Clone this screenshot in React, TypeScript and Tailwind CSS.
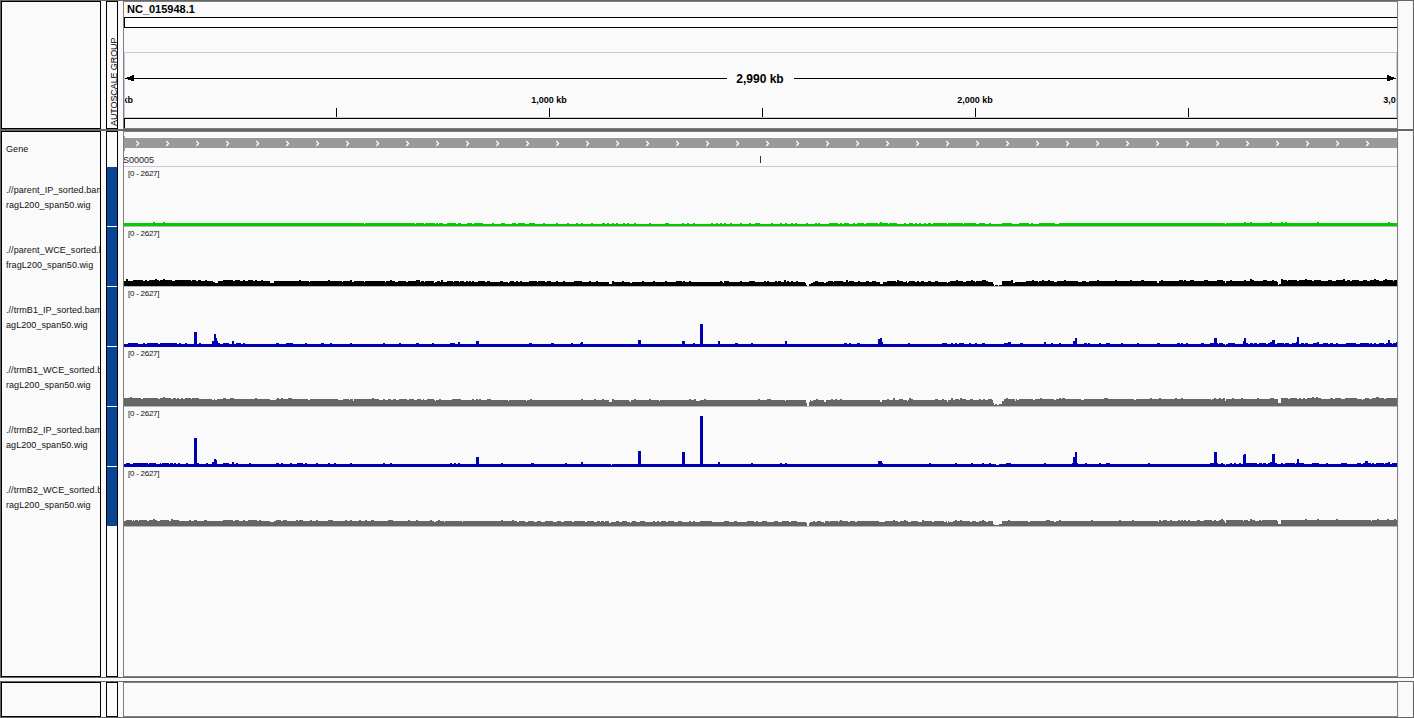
import React from "react";

type Track = {
  name: [string, string];
  color: string;
  bottom: number;
  base: string;
  steps: string;
};

const LEFT = 124;
const RIGHT = 1397;

// base: "x:height" breakpoints. steps: "height=x,width x,width ..." groups; later groups overwrite earlier ones.
const TRACKS: Track[] = [
  {
    name: [".//parent_IP_sorted.bam.f", "ragL200_span50.wig"],
    color: "#00cc00",
    bottom: 59,
    base: "124:3 415:2 1059:3",
    steps:
      "2=364,1 1225,1;3=416,8 425,10 436,2 439,4 447,9 458,3 467,5 474,9 492,2 501,4 512,4 518,7 529,6 543,2 556,2 567,2 576,2 581,2 591,2 602,3 607,2 612,2 616,2 623,2 627,2 634,2 649,2 665,4 682,2 687,2 693,2 711,2 716,2 720,2 724,2 730,2 740,2 749,2 755,5 771,2 780,2 785,2 791,2 795,2 806,2 815,2 818,2 829,9 840,2 844,5 853,2 857,7 866,12 879,9 889,8 904,2 909,4 915,2 919,2 924,2 928,3 933,14 948,15 964,12 979,6 989,2 1002,10 1019,10 1031,2 1039,16;4=153,2 163,2 880,2 1244,2 1250,2 1270,2 1281,2 1285,2 1317,2 1388,2",
  },
  {
    name: [".//parent_WCE_sorted.bam.", "fragL200_span50.wig"],
    color: "#000000",
    bottom: 59,
    base: "124:5 434:4 1002:5",
    steps:
      "6=126,2 133,10 145,2 149,10 160,12 175,16 192,4 198,3 205,2 223,10 235,5 243,2 248,5 255,2 261,2 299,2 328,2 350,2 390,2 416,4 441,2 784,2 846,2 897,2 956,2 971,2 982,4 1011,2 1032,2 1042,2 1048,2 1064,2 1097,2 1115,2 1130,2 1141,3 1161,2 1179,4 1184,2 1190,4 1204,4 1217,6 1230,2 1244,2 1252,2 1263,4 1272,2 1283,4 1288,9 1299,10 1308,4 1314,7 1328,4 1336,7 1347,3 1352,7 1363,4 1370,9 1383,10 1394,3;7=126,2 155,2 163,2 1250,2 1281,2 1305,2 1343,2 1374,2 1385,2;5=437,3 447,6 454,5 460,4 466,2 469,2 472,2 478,7 487,3 500,3 510,4 516,2 520,2 529,8 538,7 547,4 556,2 563,2 574,8 589,2 596,2 612,2 622,2 642,2 653,2 665,2 676,6 683,2 689,2 720,2 724,5 740,2 749,6 764,2 767,2 775,2 778,3 787,2 791,2 796,2 815,3 828,5 834,9 849,5 858,2 866,3 872,4 887,9 899,4 906,2 909,6 917,2 921,3 928,3 935,3 950,6 958,5 966,5 973,2 976,6 986,2;4=213,5 309,1 342,1 352,2 364,1 385,1 395,3 406,2 420,1 424,1 1015,11 1038,1 1054,3 1078,4 1086,3 1277,1;3=215,3 270,4 434,1 508,1 630,2 723,1 811,2 824,2 907,1 947,1 805,1 1013,2 1157,2 1225,1;2=609,3 809,2 880,3 993,1 1279,2;1=806,1 995,3 999,3 1278,1;0=807,2 994,1 998,1",
  },
  {
    name: [".//trmB1_IP_sorted.bam.fr", "agL200_span50.wig"],
    color: "#0000b2",
    bottom: 60,
    base: "124:3",
    steps:
      "4=128,10 143,2 147,11 160,17 179,2 185,2 199,2 216,4 223,6 236,5 243,2 276,3 286,7 305,2 321,3 330,2 350,2 383,2 399,2 416,3 432,2 450,5 529,3 551,3 571,2 580,1 693,2 735,3 751,2 844,3 849,2 857,3 908,2 942,5 951,2 955,2 959,5 969,2 975,2 982,3 1004,4 1020,3 1051,2 1059,2 1084,3 1088,2 1099,2 1106,4 1121,2 1137,2 1157,3 1177,3 1181,2 1186,2 1201,3 1210,4 1217,1 1219,4 1228,7 1246,2 1250,3 1254,3 1259,7 1268,2 1277,7 1285,4 1292,4 1301,3 1305,3 1313,4 1323,5 1330,3 1336,2 1346,10 1360,9 1370,2 1374,2 1379,5 1386,2 1390,2 1393,3;5=458,2 581,2 882,1 1008,3 1044,2 1270,2 1296,1 1317,2 1396,1;6=212,2 217,1 232,2 476,3 682,3 718,2 785,2 1073,2 1243,1;7=638,3 1272,3 1388,2;8=878,2;9=216,1 880,2 1075,2 1214,3 1244,2;10=1297,2;13=214,2;15=194,3;23=700,3;2=1225,1",
  },
  {
    name: [".//trmB1_WCE_sorted.bam.f", "ragL200_span50.wig"],
    color: "#666666",
    bottom: 59,
    base: "124:7 434:6 1003:7",
    steps:
      "8=124,17 143,15 160,11 173,3 177,2 181,2 185,6 192,7 223,3 230,4 255,2 277,2 281,2 288,4 372,2 893,2 909,2 951,2 960,2 1006,2 1040,2 1059,2 1062,3 1104,4 1150,2 1159,2 1175,2 1181,2 1214,2 1219,2 1223,2 1232,2 1241,2 1257,2 1270,4 1281,7 1290,7 1299,2 1303,2 1307,5 1314,2 1318,3 1330,3 1335,6 1345,12 1365,4 1372,4 1379,5 1386,11;9=130,2 163,2 1312,2 1316,2 1376,3;7=439,2 452,9 472,2 476,2 479,2 487,4 530,2 581,2 594,2 602,2 612,2 634,2 649,2 689,2 694,2 704,2 758,2 767,4 816,2 831,2 835,2 840,2 887,2 899,4 911,2 935,3 942,2 955,4 962,4 970,3 979,2 983,2 988,4;6=212,2 215,2 270,6 308,2 338,5 349,1 379,4 385,3 391,2 396,3 407,2 414,3 421,2 424,3 1017,2 1033,2 1054,2 1081,3 1134,2 1211,1 1362,1;5=353,1 435,1 508,1 526,1 629,2 659,1 696,4 785,1 811,2 907,1 1002,2 1015,1 1225,1;4=609,3 630,1 809,1 824,2 880,2 947,1;3=806,1 993,1 1278,3;2=995,2 999,3;1=994,1 997,2;0=807,2",
  },
  {
    name: [".//trmB2_IP_sorted.bam.fr", "agL200_span50.wig"],
    color: "#0000b2",
    bottom: 60,
    base: "124:3",
    steps:
      "4=126,4 133,15 149,7 160,1 162,7 170,3 174,2 178,2 186,2 197,2 206,2 223,6 236,2 249,2 276,3 281,2 290,2 297,6 305,2 316,2 328,2 334,2 350,2 383,2 390,2 450,2 454,2 458,2 501,2 531,3 565,2 751,2 780,2 785,2 882,1 929,2 955,2 971,2 982,2 989,2 1006,5 1044,2 1072,6 1085,2 1099,2 1106,4 1148,2 1210,4 1217,1 1221,2 1230,2 1234,2 1239,2 1246,11 1259,3 1263,3 1268,2 1275,2 1281,2 1285,10 1296,1 1299,5 1312,7 1326,2 1341,6 1357,4 1363,2 1368,3 1372,2 1376,8 1385,3 1392,5;5=212,2 232,2 581,2 718,2 1270,2 1388,2;6=878,4 1365,3;7=216,1;8=214,2 1297,2;10=476,3 1073,2;12=1243,1;13=1244,2 1272,3;15=682,3 1075,2 1214,3;16=638,3;29=194,3;51=700,3;2=611,1 996,3 1225,1",
  },
  {
    name: [".//trmB2_WCE_sorted.bam.f", "ragL200_span50.wig"],
    color: "#666666",
    bottom: 59,
    base: "124:5 609:4 811:5 1281:6",
    steps:
      "6=126,6 133,1 135,3 139,8 149,8 160,9 171,8 189,2 194,3 204,3 223,10 235,4 243,2 248,9 259,2 276,5 283,4 296,2 299,4 310,2 316,2 328,5 345,2 350,2 359,2 365,2 371,3 388,5 408,2 416,2 430,2 438,2 501,2 512,2 840,2 893,2 904,2 922,2 955,2 960,2 982,2 1008,2 1046,4 1059,2 1091,2 1119,2 1132,2 1159,2 1163,4 1170,2 1178,2 1181,2 1184,2 1188,2 1197,3 1204,8 1214,2 1219,5 1226,17 1244,4 1252,3 1259,2 1262,15;7=153,2 171,2 1221,2 1250,2 1305,2 1317,2 1336,2 1377,2 1387,2 1394,2;5=616,3 622,5 632,4 640,5 653,2 657,2 661,5 668,6 678,4 689,2 693,2 700,12 724,5 734,3 747,7 756,2 762,5 774,4 782,7 791,6 1371,1;4=270,4 434,2 444,1 462,1 517,2 525,3 534,3 541,4 553,4 561,3 572,2 585,2 594,3 600,1 604,1 809,4 815,2 821,4 829,1 838,1 848,2 855,2 879,6 898,2 908,3 918,4 932,2 944,2 949,4 970,2 976,3 986,2 1028,2 1054,2 1158,1;3=609,2 630,1 806,1 809,1 824,1 947,1 1225,1;2=993,1 999,3 1278,3;1=994,5;0=807,2",
  },
];

function heights(track: Track): number[] {
  const out: number[] = new Array(RIGHT - LEFT).fill(0);
  for (const part of track.base.split(" ")) {
    const [x, h] = part.split(":").map(Number);
    out.fill(h, x - LEFT);
  }
  for (const group of track.steps.split(";")) {
    const [h, list] = group.split("=");
    for (const item of list.split(" ")) {
      const [x, w] = item.split(",").map(Number);
      out.fill(Number(h), x - LEFT, x - LEFT + w);
    }
  }
  return out;
}

function profilePath(track: Track): string {
  const hs = heights(track);
  let d = `M0 ${track.bottom}`;
  hs.forEach((h, i) => {
    if (i === 0 || hs[i - 1] !== h) d += `V${track.bottom - h}`;
    d += `H${i + 1}`;
  });
  return `${d}V${track.bottom}Z`;
}

function Row({
  height,
  names,
  attributes,
  children,
}: {
  height: string;
  names?: React.ReactNode;
  attributes?: React.ReactNode;
  children?: React.ReactNode;
}) {
  return (
    <div className={`flex border-x border-[#666] ${height}`}>
      <div className="mr-[5px] w-[100px] shrink-0 overflow-hidden border border-black">{names}</div>
      <div className="mr-[5px] w-[12px] shrink-0 border border-black">{attributes}</div>
      <div className="w-[1275px] shrink-0 overflow-hidden border border-[#808080]">{children}</div>
      <div className="flex-1 border-l border-r border-[#f0f0f0]" />
    </div>
  );
}

function Ruler() {
  return (
    <svg className="block" width="1271" height="64" viewBox="125 53 1271 64" fontWeight="bold">
      <g shapeRendering="crispEdges" fill="#000">
        <rect x="125" y="78" width="602" height="1" />
        <rect x="794" y="78" width="602" height="1" />
        {[336, 549, 762, 975, 1188].map((x) => (
          <rect key={x} x={x} y="108" width="1" height="9" />
        ))}
        <path d="M125 78H127V77H130V76H132V75H134V81H131V80H128V79H125Z" />
        <path d="M1396 78H1394V77H1391V76H1389V75H1387V81H1390V80H1393V79H1396Z" />
      </g>
      <text x="760" y="83" fontSize="12" textAnchor="middle">2,990 kb</text>
      <g fontSize="9" textAnchor="middle">
        <text x="124" y="103">0 kb</text>
        <text x="549" y="103">1,000 kb</text>
        <text x="975" y="103">2,000 kb</text>
        <text x="1401" y="103">3,000 kb</text>
      </g>
    </svg>
  );
}

function GeneTrack() {
  return (
    <svg className="block" width="1273" height="35" viewBox="124 132 1273 35">
      <g shapeRendering="crispEdges">
        <rect x="124" y="138" width="1273" height="10" fill="#999" />
        <rect x="124" y="136" width="1" height="15" fill="#999" />
        <rect x="760" y="156" width="1" height="7" fill="#333" />
        <rect x="124" y="166" width="1273" height="1" fill="#c8c8dc" />
      </g>
      <path
        d={Array.from({ length: 42 }, (_, i) => `M${136.3 + i * 30} 141l2.3 2.5l-2.3 2.5`).join("")}
        fill="none"
        stroke="#fff"
        strokeWidth="1.2"
      />
      <text x="123" y="163" fontSize="9" fill="#222">S00005</text>
    </svg>
  );
}

export default function App() {
  return (
    <div className="h-[718px] w-[1414px] overflow-hidden bg-[#fafafa] font-['Liberation_Sans',Arial,sans-serif] text-black">
      <div className="h-px bg-[#666]" />
      <Row
        height="h-[128px]"
        attributes={
          <div className="flex h-full rotate-180 items-start pt-[2px] pr-[2px] text-[9px] leading-[11px] tracking-[-0.1px] whitespace-nowrap [writing-mode:vertical-rl]">
            AUTOSCALE GROUP
          </div>
        }
      >
        <div className="h-[15px] pl-[3px] text-[11px] leading-[15px] font-bold">NC_015948.1</div>
        <div className="h-[11px] border-y border-l border-black bg-white" />
        <div className="mt-6 h-[66px] border border-[#c8c8dc]">
          <Ruler />
        </div>
        <div className="h-[10px] border-t border-l border-black" />
      </Row>
      <div className="h-[2px] bg-[#666]" />
      <Row
        height="h-[546px]"
        names={
          <div className="pl-1 text-[9px] tracking-[0.06px] whitespace-nowrap text-[#111]">
            <div className="h-[35px] leading-[35px]">Gene</div>
            {TRACKS.map((t) => (
              <div key={t.name[0]} className="h-[60px] pt-4 leading-[15px]">
                <div>{t.name[0]}</div>
                <div>{t.name[1]}</div>
              </div>
            ))}
          </div>
        }
        attributes={
          <div className="pt-[35px]">
            {TRACKS.map((t) => (
              <div key={t.name[0]} className="h-[60px] border-b border-white bg-[#0a4595]" />
            ))}
          </div>
        }
      >
        <GeneTrack />
        {TRACKS.map((t) => (
          <svg key={t.name[0]} className="block" width="1273" height="60" viewBox="0 0 1273 60">
            <rect y="59" width="1273" height="1" fill="#b8b8b8" shapeRendering="crispEdges" />
            <path d={profilePath(t)} fill={t.color} shapeRendering="crispEdges" />
            <text x="4" y="9" fontSize="8" fill="#111" textLength="31.5" lengthAdjust="spacing">
              [0 - 2627]
            </text>
          </svg>
        ))}
      </Row>
      <div className="h-px bg-[#666]" />
      <div className="h-[3px]" />
      <div className="h-px bg-[#666]" />
      <Row height="h-[35px]" />
      <div className="h-px bg-[#666]" />
    </div>
  );
}
